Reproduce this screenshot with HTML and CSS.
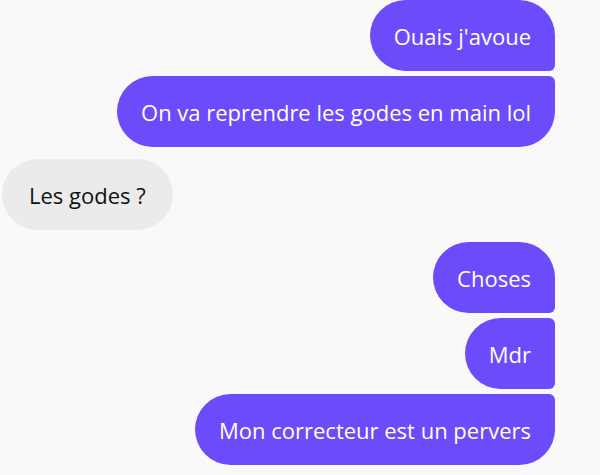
FILE: index.html
```html
<!DOCTYPE html>
<html lang="fr">
<head>
  <meta charset="UTF-8">
  <meta name="viewport" content="width=device-width, initial-scale=1.0">
  <title>Conversation</title>
  <link rel="stylesheet" href="styles.css">
</head>
<body>
  <div class="chat">
    <div class="group sent">
      <div class="bubble first">Ouais j'avoue</div>
      <div class="bubble last">On va reprendre les godes en main lol</div>
    </div>
    <div class="group received">
      <div class="bubble">Les godes ?</div>
    </div>
    <div class="group sent">
      <div class="bubble first">Choses</div>
      <div class="bubble">Mdr</div>
      <div class="bubble last">Mon correcteur est un pervers</div>
    </div>
  </div>
</body>
</html>
```

FILE: styles.css
```css
body {
  margin: 0;
  background-color: #f9f9f9;
  font-family: "Open Sans", "Noto Sans", sans-serif;
}

.chat {
  display: flex;
  flex-direction: column;
  gap: 12px;
  padding: 0 45px 0 2px;
}

.group {
  display: flex;
  flex-direction: column;
  gap: 5px;
}

.group.sent {
  align-items: flex-end;
}

.group.received {
  align-items: flex-start;
}

.bubble {
  height: 71px;
  box-sizing: border-box;
  display: flex;
  align-items: center;
  padding: 0 24px;
  font-size: 22px;
  border-radius: 36px;
}

.sent .bubble {
  background-color: #6c4bfa;
  color: #ffffff;
  border-top-right-radius: 6px;
  border-bottom-right-radius: 6px;
}

.sent .bubble.first {
  border-top-right-radius: 36px;
}

.sent .bubble.last {
  border-bottom-right-radius: 36px;
}

.received .bubble {
  background-color: #ebebeb;
  color: #111111;
  padding: 0 27px;
}
```
